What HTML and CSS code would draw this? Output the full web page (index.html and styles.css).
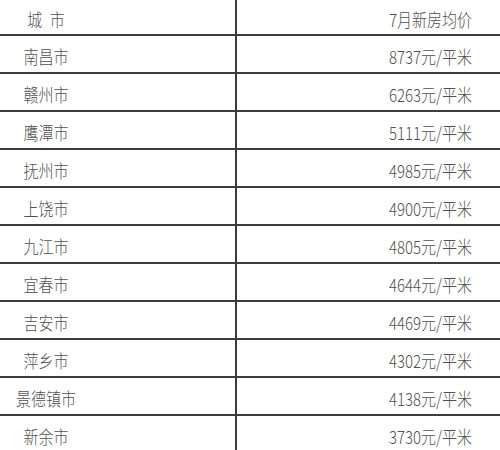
FILE: index.html
```html
<!DOCTYPE html>
<html lang="zh">
<head>
<meta charset="utf-8">
<link rel="stylesheet" href="styles.css">
</head>
<body>
<div class="table">
  <div class="row head"><div class="city"><span class="txt">城&ensp;市</span></div><div class="price"><span class="txt">7月新房均价</span></div></div>
  <div class="row"><div class="city"><span class="txt">南昌市</span></div><div class="price"><span class="txt">8737元/平米</span></div></div>
  <div class="row"><div class="city"><span class="txt">赣州市</span></div><div class="price"><span class="txt">6263元/平米</span></div></div>
  <div class="row"><div class="city"><span class="txt">鹰潭市</span></div><div class="price"><span class="txt">5111元/平米</span></div></div>
  <div class="row"><div class="city"><span class="txt">抚州市</span></div><div class="price"><span class="txt">4985元/平米</span></div></div>
  <div class="row"><div class="city"><span class="txt">上饶市</span></div><div class="price"><span class="txt">4900元/平米</span></div></div>
  <div class="row"><div class="city"><span class="txt">九江市</span></div><div class="price"><span class="txt">4805元/平米</span></div></div>
  <div class="row"><div class="city"><span class="txt">宜春市</span></div><div class="price"><span class="txt">4644元/平米</span></div></div>
  <div class="row"><div class="city"><span class="txt">吉安市</span></div><div class="price"><span class="txt">4469元/平米</span></div></div>
  <div class="row"><div class="city"><span class="txt">萍乡市</span></div><div class="price"><span class="txt">4302元/平米</span></div></div>
  <div class="row"><div class="city"><span class="txt">景德镇市</span></div><div class="price"><span class="txt">4138元/平米</span></div></div>
  <div class="row last"><div class="city"><span class="txt">新余市</span></div><div class="price"><span class="txt">3730元/平米</span></div></div>
</div>
</body>
</html>
```
FILE: styles.css
```css
html, body {
  margin: 0;
  padding: 0;
  background: #ffffff;
}
body {
  width: 500px;
  height: 450px;
  overflow: hidden;
  font-family: "Noto Sans CJK SC", "Noto Sans", sans-serif;
  font-size: 15px;
  font-weight: 300;
  color: #505050;
}
.table {
  display: flex;
  flex-direction: column;
}
.row {
  display: grid;
  grid-template-columns: 237px 1fr;
  height: 36px;
  border-bottom: 2px solid #3c3c3c;
}
.row.head {
  height: 34px;
}
.row.last {
  border-bottom: none;
}
.city {
  border-right: 2px solid #3c3c3c;
  display: flex;
  align-items: center;
  padding-top: 5px;
  box-sizing: border-box;
}
.city .txt {
  width: 92px;
  text-align: center;
  white-space: pre;
}
.price {
  display: flex;
  align-items: center;
  justify-content: flex-end;
  padding-right: 28px;
  padding-top: 5px;
  box-sizing: border-box;
}
.txt {
  display: inline-block;
  line-height: 1;
  transform: scaleY(1.2);
}
```
